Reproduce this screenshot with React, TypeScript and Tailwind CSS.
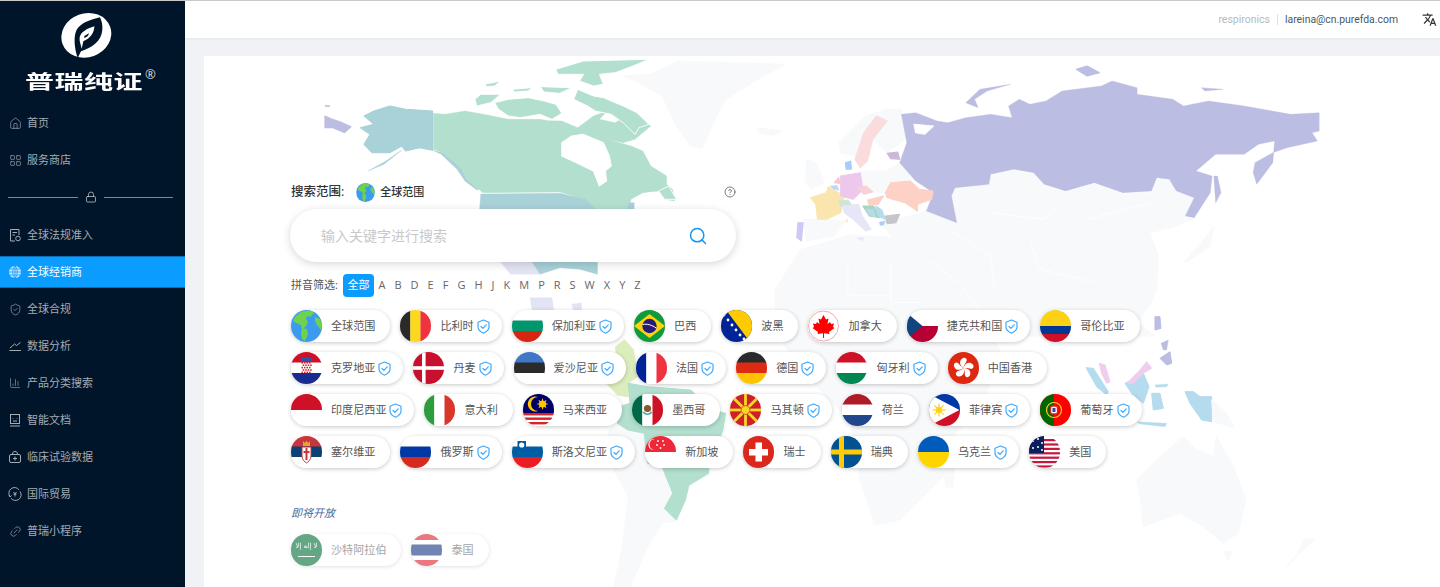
import React from "react";
import { Home, LayoutGrid, Lock, ShieldCheck, ChartColumn, Search, CircleHelp, Link2 } from "lucide-react";
import { MdTranslate } from "react-icons/md";

const FONT = "font-['Open_Sans','Noto_Sans_CJK_SC',sans-serif]";

const Shield = () => (
  <svg width="13" height="15" viewBox="0 0 13 15" fill="none" stroke="#42a9fb" strokeWidth="1.2" strokeLinejoin="round" strokeLinecap="round" className="shrink-0">
    <path d="M6.5 1 L12 3.2 V8 C12 11 9.5 12.8 6.5 14.2 C3.5 12.8 1 11 1 8 V3.2 Z" />
    <path d="M4 7.5 L5.9 9.4 L9.2 5.8" />
  </svg>
);

const Fl = ({ children, bg = "#fff", dim = false }: { children?: React.ReactNode; bg?: string; dim?: boolean }) => (
  <svg viewBox="0 0 31 32" className={`w-[31px] h-[32px] rounded-full shrink-0 ${dim ? "opacity-60" : ""}`} style={{ background: bg }}>
    {children}
  </svg>
);
const H3 = ({ a, b, c }: { a: string; b: string; c: string }) => (
  <>
    <rect width="31" height="11" y="0" fill={a} />
    <rect width="31" height="11" y="10.5" fill={b} />
    <rect width="31" height="11" y="21" fill={c} />
  </>
);
const V3 = ({ a, b, c }: { a: string; b: string; c: string }) => (
  <>
    <rect width="10.5" height="32" x="0" fill={a} />
    <rect width="10.5" height="32" x="10.3" fill={b} />
    <rect width="10.5" height="32" x="20.5" fill={c} />
  </>
);

const Globe = () => (
  <>
    <rect width="31" height="32" fill="#3c9bee" />
    <path d="M4 7 L10 2 L19 0 L23 3 L19 7 L16 6 L15 9 L17 12 L15 16 L11 20 L10 15 L5 13 L2 11 Z" fill="#6fd24c" />
    <path d="M11 18 L16 19 L17 24 L14 31 L11 29 L10 23 Z" fill="#6fd24c" />
    <path d="M24 7 L29 9 L31 14 L30 20 L26 15 L24 11 Z" fill="#6fd24c" />
  </>
);

const flags: Record<string, React.ReactNode> = {
  全球范围: <Fl><Globe /></Fl>,
  比利时: <Fl><V3 a="#2a2a2a" b="#fcd91f" c="#ef3340" /></Fl>,
  保加利亚: <Fl><H3 a="#fff" b="#00966e" c="#d62612" /></Fl>,
  巴西: (
    <Fl bg="#0f9b3b">
      <path d="M15.5 4 L31 16 L15.5 28 L0 16 Z" fill="#fdd20a" />
      <circle cx="15.5" cy="16" r="7.2" fill="#2a1a78" />
      <path d="M8.6 14.5 C13 13.5 18 15 22.4 18.2" stroke="#fff" strokeWidth="1" fill="none" />
    </Fl>
  ),
  波黑: (
    <Fl bg="#002395">
      <path d="M5 0 H31 V32 H29 Z" fill="#fecb00" />
      {[[3,5],[7,10],[11,15],[15,20],[19,25],[23,29]].map(([x, y], i) => (
        <circle key={i} cx={x} cy={y} r="1.4" fill="#fff" />
      ))}
    </Fl>
  ),
  加拿大: (
    <Fl>
      <circle cx="15.5" cy="16" r="15" fill="none" stroke="#f9a7a7" strokeWidth="1" />
      <path d="M15.5 5 L18 9.5 L20.5 8.5 L19.5 14 L22 12 L23 14 L26 13.5 L25 17 L26.5 18 L21 22 L21.5 24 L16 23.3 V28 H15 V23.3 L9.5 24 L10 22 L4.5 18 L6 17 L5 13.5 L8 14 L9 12 L11.5 14 L10.5 8.5 L13 9.5 Z" fill="#ff0000" />
    </Fl>
  ),
  捷克共和国: (
    <Fl>
      <rect y="16" width="31" height="16" fill="#b80035" />
      <path d="M0 3 L15.5 16 L0 29 Z" fill="#11457e" />
    </Fl>
  ),
  哥伦比亚: <Fl><rect width="31" height="16" fill="#fcd116" /><rect y="16" width="31" height="8" fill="#003893" /><rect y="24" width="31" height="8" fill="#ce1126" /></Fl>,
  克罗地亚: (
    <Fl>
      <H3 a="#ce1126" b="#fff" c="#1a2b8f" />
      <rect x="10" y="5.5" width="11" height="4" fill="#2b55a8" />
      {[0,1,2,3,4].map((r) => [0,1,2,3].map((c) => (
        <rect key={`${r}${c}`} x={10.5 + c * 2.5 + (r % 2) * 1.2} y={10 + r * 2.4} width="1.5" height="1.6" fill="#d8222a" />
      )))}
    </Fl>
  ),
  丹麦: <Fl bg="#c8102e"><rect x="9" width="3.6" height="32" fill="#fff" /><rect y="14.2" width="31" height="3.6" fill="#fff" /></Fl>,
  爱沙尼亚: <Fl><H3 a="#4077c9" b="#2a2a2a" c="#fff" /></Fl>,
  法国: <Fl><V3 a="#002395" b="#fff" c="#ef3340" /></Fl>,
  德国: <Fl><H3 a="#2a2a2a" b="#dd2a12" c="#ffc400" /></Fl>,
  匈牙利: <Fl><H3 a="#ce1126" b="#fff" c="#008751" /></Fl>,
  中国香港: (
    <Fl bg="#de2910">
      {[0, 72, 144, 216, 288].map((r) => (
        <path key={r} d="M15.5 16 C11 13 11 8 15 6 C18.5 5 20 8.5 17.5 11 C16.5 12.5 16 14 15.5 16 Z" fill="#fff" transform={`rotate(${r} 15.5 16)`} />
      ))}
    </Fl>
  ),
  印度尼西亚: <Fl><rect width="31" height="16" fill="#ce1126" /></Fl>,
  意大利: <Fl><V3 a="#2e9b3f" b="#fff" c="#d8372b" /></Fl>,
  马来西亚: (
    <Fl>
      <rect width="31" height="19" fill="#010066" />
      <rect y="19" width="31" height="2.4" fill="#d8222a" />
      <rect y="23.5" width="31" height="2.4" fill="#d8222a" />
      <rect y="28" width="31" height="2.4" fill="#d8222a" />
      <path d="M15 3 A7.5 7.5 0 1 0 15 17 A6 6 0 1 1 15 3 Z" fill="#fbc800" />
      <circle cx="19.5" cy="10" r="3.6" fill="#fbc800" />
      {[0,45,90,135].map((r) => <rect key={r} x="14.3" y="9.5" width="10.4" height="1" fill="#fbc800" transform={`rotate(${r} 19.5 10)`} />)}
    </Fl>
  ),
  墨西哥: (
    <Fl>
      <V3 a="#006847" b="#fff" c="#ce1126" />
      <circle cx="15.5" cy="14.5" r="3.6" fill="#8a5a2b" />
      <path d="M10.5 18 C12 22 19 22 20.5 18 L19 17.5 C17 20 14 20 12 17.5 Z" fill="#5fa3a0" />
    </Fl>
  ),
  马其顿: (
    <Fl bg="#ce2028">
      {[0,45,90,135].map((r) => <rect key={r} x="-6" y="14.6" width="43" height="2.8" fill="#f8d826" transform={`rotate(${r} 15.5 16)`} />)}
      <circle cx="15.5" cy="16" r="4.4" fill="#f8d826" stroke="#ce2028" strokeWidth="0.7" />
    </Fl>
  ),
  荷兰: <Fl><H3 a="#ae1c28" b="#fff" c="#21468b" /></Fl>,
  菲律宾: (
    <Fl>
      <rect width="31" height="16" fill="#0038a8" />
      <rect y="16" width="31" height="16" fill="#ce1126" />
      <path d="M0 0 L31 16 L0 32 Z" fill="#fff" transform="scale(0.98 1)" />
      <circle cx="10" cy="16" r="3" fill="#fcd116" />
      {[0,45,90,135].map((r) => <rect key={r} x="3.5" y="15.4" width="13" height="1.2" fill="#fcd116" transform={`rotate(${r} 10 16)`} />)}
    </Fl>
  ),
  葡萄牙: (
    <Fl bg="#ff0000">
      <rect width="14" height="32" fill="#006600" />
      <circle cx="14" cy="16" r="7.5" fill="none" stroke="#f3d21a" strokeWidth="1.2" />
      <rect x="10.5" y="12" width="7" height="8" rx="2" fill="#fff" stroke="#d22" strokeWidth="1.3" />
      <rect x="12.5" y="14" width="3" height="4" fill="#2a4ba0" />
    </Fl>
  ),
  塞尔维亚: (
    <Fl>
      <H3 a="#c6363c" b="#0c4076" c="#fff" />
      <path d="M11 11 H20 V20 C20 24 17 26 15.5 27 C14 26 11 24 11 20 Z" fill="#fff" stroke="#c6363c" strokeWidth="1" />
      <path d="M12 5 L14 7 L15.5 4.5 L17 7 L19 5 V10 H12 Z" fill="#e0a92e" />
      <path d="M15.5 12 V24 M12.5 16 H18.5" stroke="#c6363c" strokeWidth="2" />
    </Fl>
  ),
  俄罗斯: <Fl><H3 a="#fff" b="#0039a6" c="#d52b1e" /></Fl>,
  斯洛文尼亚: (
    <Fl>
      <H3 a="#fff" b="#005da4" c="#ed1c24" />
      <path d="M5.5 5 H14 V11 C14 13 11 14.5 9.7 15 C8.5 14.5 5.5 13 5.5 11 Z" fill="#005da4" />
      <circle cx="9.7" cy="9" r="2.6" fill="#fff" />
    </Fl>
  ),
  新加坡: (
    <Fl>
      <rect width="31" height="16" fill="#ed2939" />
      <path d="M10 3 A5.6 5.6 0 1 0 10 14 A4.6 4.6 0 1 1 10 3 Z" fill="#fff" />
      {[[13,5],[18,5],[12,9],[19,9],[15.5,12]].map(([x, y], i) => <circle key={i} cx={x} cy={y} r="0.9" fill="#fff" />)}
    </Fl>
  ),
  瑞士: <Fl bg="#da291c"><rect x="12.5" y="6.5" width="6.5" height="19" fill="#fff" /><rect x="6" y="13" width="19" height="6.5" fill="#fff" /></Fl>,
  瑞典: <Fl bg="#005293"><rect x="8" width="5" height="32" fill="#fecc00" /><rect y="13.5" width="31" height="5" fill="#fecc00" /></Fl>,
  乌克兰: <Fl><rect width="31" height="16" fill="#005bbb" /><rect y="16" width="31" height="16" fill="#ffd500" /></Fl>,
  美国: (
    <Fl>
      {[0,1,2,3,4,5,6].map((i) => <rect key={i} y={3 + i * 4.4} width="31" height="2.2" fill="#c8163c" />)}
      <rect width="15" height="17" fill="#0a1f5c" />
      {[[4,5],[9,3],[13,7],[4,12],[9,11],[13,14]].map(([x, y], i) => <circle key={i} cx={x} cy={y} r="1" fill="#fff" />)}
    </Fl>
  ),
  沙特阿拉伯: (
    <Fl bg="#006c35" dim>
      <text x="15.5" y="14" textAnchor="middle" fontSize="7" fill="#fff" fontFamily="DejaVu Sans">لا إله إلا</text>
      <rect x="7" y="22" width="17" height="1" fill="#fff" />
    </Fl>
  ),
  泰国: (
    <Fl dim>
      <rect y="0" width="31" height="6" fill="#dd1f2d" />
      <rect y="10.5" width="31" height="11" fill="#14317f" />
      <rect y="26" width="31" height="6" fill="#dd1f2d" />
    </Fl>
  ),
};

const rows: [string, boolean][] = [
  ["全球范围", false], ["比利时", true], ["保加利亚", true], ["巴西", false], ["波黑", false], ["加拿大", false], ["捷克共和国", true], ["哥伦比亚", false],
  ["克罗地亚", true], ["丹麦", true], ["爱沙尼亚", true], ["法国", true], ["德国", true], ["匈牙利", true], ["中国香港", false],
  ["印度尼西亚", true], ["意大利", false], ["马来西亚", false], ["墨西哥", false], ["马其顿", true], ["荷兰", false], ["菲律宾", true], ["葡萄牙", true],
  ["塞尔维亚", false], ["俄罗斯", true], ["斯洛文尼亚", true], ["新加坡", false], ["瑞士", false], ["瑞典", false], ["乌克兰", true], ["美国", false],
];

const Pill = ({ name, verified, dim }: { name: string; verified?: boolean; dim?: boolean }) => (
  <div className={`flex items-center h-[32px] bg-white rounded-full ${verified ? "pr-[12px]" : "pr-[15px]"} ${dim ? "shadow-[0_1px_4px_rgba(0,0,0,0.12)]" : "shadow-[0_1px_4px_rgba(0,0,0,0.22)]"}`}>
    {flags[name]}
    <span className={`ml-[9px] text-[11.1px] leading-none whitespace-nowrap ${dim ? "text-[#a5a5a5]" : "text-[#555]"}`}>{name}</span>
    {verified && <span className="ml-[3px] flex"><Shield /></span>}
  </div>
);

const IconDoc = () => (
  <svg width="14" height="14" viewBox="0 0 14 14" fill="none" stroke="currentColor" strokeWidth="1">
    <path d="M7 13 H2.5 V1.5 H11 V7" /><path d="M4.5 4.5 H9 M4.5 7 H7" /><circle cx="10" cy="10.5" r="2.3" />
  </svg>
);
const IconGlobe = () => (
  <svg width="14" height="14" viewBox="0 0 14 14" fill="none">
    <circle cx="7" cy="7" r="6" fill="#cfeaff" />
    <path d="M1 7 H13 M2 4 H12 M2 10 H12 M7 1 V13 M7 1 C4 3 4 11 7 13 M7 1 C10 3 10 11 7 13" stroke="#0a9cff" strokeWidth="0.8" />
  </svg>
);
const IconLine = () => (
  <svg width="14" height="14" viewBox="0 0 14 14" fill="none" stroke="currentColor" strokeWidth="1">
    <path d="M1.5 11.5 H13" /><path d="M2 9 L6.5 5 L8.5 6.5 L12.5 3.5" />
  </svg>
);
const IconFace = () => (
  <svg width="14" height="14" viewBox="0 0 14 14" fill="none" stroke="currentColor" strokeWidth="1">
    <rect x="2.5" y="1.5" width="9" height="9" /><path d="M5 5 V5.6 M9 5 V5.6 M5 8 H9" /><path d="M2 13 H12" />
  </svg>
);
const IconKit = () => (
  <svg width="14" height="14" viewBox="0 0 14 14" fill="none" stroke="currentColor" strokeWidth="1">
    <rect x="1.5" y="4.5" width="11" height="8" rx="1.5" /><path d="M4.5 4.5 C4.5 2 5.5 1.5 7 1.5 C8.5 1.5 9.5 2 9.5 4.5" /><path d="M7 6.5 V10.5 M5 8.5 H9" />
  </svg>
);
const IconTrade = () => (
  <svg width="14" height="14" viewBox="0 0 14 14" fill="none" stroke="currentColor" strokeWidth="1">
    <path d="M2 9.5 A5.5 5.5 0 0 1 11 2.8" /><path d="M12 4.5 A5.5 5.5 0 0 1 3 11.2" /><path d="M1 8 L2 10 L3.5 8.5" /><path d="M5.5 5 L7 7 L8.5 5 M5.5 7.2 H8.5 M7 7 V9.5" />
  </svg>
);

const Item = ({ icon, label, active }: { icon: React.ReactNode; label: string; active?: boolean }) => (
  <div className={`h-[32px] flex items-center pl-[8px] text-[11px] ${active ? "bg-[#0a9cff] text-white border-y border-[#0b6fb8]" : "text-[#a4acb4]"}`}>
    <span className="w-[14px] flex justify-center shrink-0">{icon}</span>
    <span className="ml-[5px] whitespace-nowrap">{label}</span>
  </div>
);

const Logo = () => (
  <div className="h-[106px] relative">
    <div className="pt-[7px] pl-[55px]">
      <svg width="65" height="56" viewBox="0 0 195 168">
        <ellipse cx="94" cy="82" rx="76" ry="66" fill="#fff" transform="rotate(-20 94 82)" />
        <path d="M135 28 C105 35 78 45 65 65 C55 85 58 120 68 150 L78 130 C110 118 140 100 142 65 C143 50 140 38 135 28Z" fill="#00152a" />
        <path d="M74 88 C78 72 95 62 118 55 C118 75 105 92 85 100 L80 122 C78 110 72 100 74 88Z" fill="#fff" />
        <path d="M88 84 L102 76 C100 84 96 88 88 90Z" fill="#00152a" />
      </svg>
    </div>
    <div className="absolute left-[24px] top-[66px] w-[120px] text-center text-[29px] leading-[26px] font-bold text-white tracking-[0.5px] scale-y-[0.68] font-['Noto_Sans_CJK_SC',sans-serif] whitespace-nowrap">普瑞纯证</div>
    <div className="absolute left-[145px] top-[67px] text-[13px] leading-none text-[#d8dce0]">®</div>
  </div>
);

const Sidebar = () => (
  <aside className="w-[185px] shrink-0 bg-[#00152a] flex flex-col">
    <Logo />
    <div className="flex flex-col gap-[5px]">
      <Item icon={<Home size={13} strokeWidth={1.2} />} label="首页" />
      <Item icon={<LayoutGrid size={13} strokeWidth={1.2} />} label="服务商店" />
    </div>
    <div className="h-[43px] flex items-center pl-[8px] pr-[12px] pb-[1px]">
      <div className="w-[70px] h-px bg-[#7e8894]" />
      <div className="flex-1 flex justify-center text-[#c4c9ce]"><Lock size={12} strokeWidth={1.5} /></div>
      <div className="w-[69px] h-px bg-[#7e8894]" />
    </div>
    <div className="flex flex-col gap-[5px]">
      <Item icon={<IconDoc />} label="全球法规准入" />
      <Item icon={<IconGlobe />} label="全球经销商" active />
      <Item icon={<ShieldCheck size={13} strokeWidth={1.2} />} label="全球合规" />
      <Item icon={<IconLine />} label="数据分析" />
      <Item icon={<ChartColumn size={12} strokeWidth={1.2} />} label="产品分类搜索" />
      <Item icon={<IconFace />} label="智能文档" />
      <Item icon={<IconKit />} label="临床试验数据" />
      <Item icon={<IconTrade />} label="国际贸易" />
      <Item icon={<Link2 size={13} strokeWidth={1.2} className="-rotate-45" />} label="普瑞小程序" />
    </div>
  </aside>
);

const Header = () => (
  <header className="h-[37px] shrink-0 bg-white shadow-[0_1px_3px_rgba(0,0,0,0.05)] flex items-center justify-end pr-[3px] font-['Roboto','Noto_Sans_CJK_SC',sans-serif]">
    <span className="text-[10.5px] text-[#b3bbc2]">respironics</span>
    <span className="w-px h-[11px] bg-[#dde1e4] mx-[7px]" />
    <span className="text-[10.4px] text-[#44586a]">lareina@cn.purefda.com</span>
    <MdTranslate size={15} className="ml-[24px] text-[#333]" />
  </header>
);

const LIGHT = "#f8f9fb";
const TEAL = "#b2dfce";
const Poly = ({ p, f, s = 3 }: { p: string; f: string; s?: number }) => (
  <polygon points={p} fill={f} stroke={f} strokeWidth={s} strokeLinejoin="round" />
);
const Isle = ({ p }: { p: string }) => (
  <polygon points={p} fill={TEAL} stroke="#fff" strokeWidth={2.5} strokeLinejoin="round" />
);

const WorldMap = () => (
  <svg viewBox="204 56 1236 531" className="absolute left-0 top-0 w-[1236px] h-[531px] blur-[0.4px]" preserveAspectRatio="none">
    <Poly f={LIGHT} p="800,250 850,235 940,240 960,290 1000,350 985,400 950,440 950,470 900,520 875,525 860,480 850,420 800,370 775,330 775,290" s={1} />
    <Poly f={LIGHT} p="944,470 955,463 953,487 946,487" s={1} />

    <g transform="translate(204 56) scale(0.3954 0.3333)">
      <Poly f={LIGHT} p="1060,60 1130,55 1200,15 1470,25 1400,70 1320,130 1300,170 1260,275 1230,270 1190,200 1160,120 1100,80" />
      <Poly f={LIGHT} p="1400,215 1460,225 1440,238 1405,232" />
      <Poly f="#bcbde2" p="306,180 325,190 345,198 372,212 355,230 325,215 306,215" />
      <Poly f="#bcbde2" p="306,148 318,148 318,152 306,152" s={1} />
      <Poly f="#a8d1d8" p="578,165 510,160 470,150 430,165 405,180 430,205 395,215 420,235 405,265 425,290 470,290 500,270 510,285 545,275 578,283" />
      <Poly f="#a8d1d8" p="500,283 455,325 415,345 460,315 490,290" s={1} />
      <Poly f="#a8d1d8" p="578,283 605,290 650,335 665,370 695,400 690,402 660,375 640,340 600,295" s={1} />
      <Poly f={TEAL} p="580,172 610,175 660,165 720,178 770,190 850,190 870,194 905,195 945,215 985,180 1020,165 1000,190 1040,200 1060,185 1090,180 1130,210 1090,250 1060,260 1020,250 1080,270 1110,285 1130,330 1170,360 1170,385 1185,400 1190,435 1165,430 1150,405 1110,410 1080,430 1075,460 985,460 960,430 900,408 705,410 695,400 665,370 650,335 605,290 580,280" s={1} />
      <Poly f="#fff" p="905,260 930,240 960,235 1010,260 1025,300 1030,330 1015,345 1018,375 1000,390 985,345 950,325 905,300" />
      <Poly f="#fff" p="1100,430 1125,410 1150,425 1130,450 1105,450" />
      <Isle p="890,40 960,15 1125,10 1085,30 1040,50 1000,55 1010,85 985,90 950,75 960,55 895,55" />
      <Isle p="685,130 700,115 750,115 725,140 690,150" />
      <Isle p="745,160 735,140 770,130 820,125 860,135 890,145 905,172 880,190 850,175 800,185 770,180" />
      <Isle p="935,130 945,100 985,120 1010,125 1060,150 1095,170 1125,205 1100,215 1090,235 1060,200 1030,175 990,165 970,150" />
      <Isle p="780,100 830,95 820,105 785,108" />
      <Isle p="710,85 750,75 735,90 715,92" />
      <Isle p="850,92 930,95 900,112 860,108" />
      <Isle p="1150,405 1175,390 1195,430 1165,430" />
      <Poly f="#a8d1d8" p="700,414 900,412 965,430 990,460 697,460" s={1} />
      <Poly f="#a8d1d8" p="1075,440 1088,440 1088,460 1070,460" s={1} />
      <Poly f="#e3e4f3" p="750,618 835,618 850,655 775,655" s={1} />
      <Poly f="#a8d1d8" p="830,618 995,618 995,655 950,640 900,635 850,655" s={1} />
      <Poly f="#e3e4f3" p="825,725 880,725 885,765 830,765" s={1} />
      <Poly f="#e3e4f3" p="930,745 955,740 955,765 935,765" s={1} />
    </g>

    <g transform="translate(780 56) scale(0.3571 0.3333)">
      <Poly f={LIGHT} p="165,260 240,180 300,160 340,160 350,250 300,290 260,250 210,300 170,290" />
      <Poly f={LIGHT} p="230,345 300,345 335,320 375,370 310,385 295,410 232,405" />
      <Poly f={LIGHT} p="75,310 100,320 125,380 90,400 70,380" />
      <Poly f={LIGHT} p="65,490 120,490 185,495 150,540 75,555" />
      <Poly f={LIGHT} p="490,395 590,360 655,345 710,355 745,390 800,410 880,385 960,415 1040,410 1060,370 1090,375 1110,410 1160,425 1135,485 1160,490 1110,510 1035,530 1060,600 1055,700 1040,740 1000,800 1050,840 300,840 280,760 230,650 330,560 280,500 400,470" />
      <Poly f={LIGHT} p="60,590 200,560 300,600 300,840 0,840 0,720" />
      <path d="M190 610 V720 H310 M310 620 V740 H400 M470 520 L590 600 L600 700 M590 470 L740 490 L800 420 L860 490 L1040 440 M700 560 L730 640 L880 680 M400 600 L500 680 L560 760" fill="none" stroke="#fff" strokeWidth="2.5" />
      <Poly f="#fff" p="1060,540 1120,510 1140,495 1100,560 1130,620 1160,700 1240,800 1300,840 1070,840 1065,700 1070,600" />
      <Poly f={LIGHT} p="1130,620 1180,560 1215,510 1205,570 1150,610" />
      <Poly f="#bcbde2" p="340,175 380,170 440,195 470,200 520,185 590,175 650,185 640,150 670,130 700,145 745,135 790,105 900,90 930,75 1000,95 1000,115 1100,130 1130,150 1200,135 1300,150 1430,175 1510,170 1510,225 1490,230 1505,255 1420,275 1380,290 1330,320 1325,350 1335,385 1380,320 1385,255 1340,265 1300,295 1220,295 1165,345 1210,360 1205,410 1160,485 1135,480 1160,425 1110,405 1090,370 1055,365 1040,405 960,410 880,380 800,405 740,385 710,350 655,340 590,355 585,385 490,395 480,420 495,500 410,465 430,410 380,375 335,320 355,260" s={1} />
      <Poly f="#fff" p="375,205 430,210 405,235 380,230" />
      <Poly f="#bcbde2" p="520,140 560,100 645,85 580,105 545,130 555,155" s={1} />
      <Poly f="#bcbde2" p="830,40 860,30 895,50 860,60" />
      <Poly f="#bcbde2" p="1180,95 1240,100 1190,105" s={1} />
      <Poly f="#bcbde2" p="1215,360 1225,360 1235,410 1220,440" s={1} />
      <Poly f="#cbb8d8" p="300,292 330,288 335,310 310,308" />
      <Poly f="#fbdcde" p="210,310 235,230 270,180 300,195 260,250 245,315 225,335" />
      <Poly f="#a8cdfb" p="183,320 198,315 200,340 185,340" />
      <Poly f="#fbe5ae" p="85,425 130,410 135,392 180,420 170,470 130,490 105,490 100,445" />
      <Poly f="#ecc8ec" p="170,360 225,350 232,400 205,430 170,420" />
      <Poly f="#f9c6d0" p="150,380 165,362 170,385" s={1} />
      <Poly f="#b8d8f8" p="140,390 160,388 165,403 150,400" s={1} />
      <Poly f="#f8d0d8" p="215,395 240,390 260,408 235,415" />
      <Poly f="#cfe4d8" p="165,435 190,432 200,445 170,450" />
      <Poly f="#e5e6f6" p="175,450 220,445 230,480 255,520 240,525 205,490 180,470" />
      <Poly f="#fdd1c6" p="295,410 310,380 365,375 390,400 428,405 425,430 385,445 385,465 350,440 300,425" />
      <Poly f="#fdd1c6" p="245,432 290,420 275,445 250,448" />
      <Poly f="#a9d4c0" p="232,450 262,450 280,485 250,480" />
      <Poly f="#b4dbee" p="240,458 262,460 268,482 250,478" s={1} />
      <Poly f="#b4dbee" p="268,450 285,462 295,490 275,480" />
      <Poly f="#c5c6cc" p="295,480 335,475 325,500 300,503" />
      <Poly f="#a8cdfb" p="278,498 295,495 290,508 280,508" s={1} />
      <Poly f="#cfc8f5" p="50,500 65,500 60,555 47,545" />
      <Poly f="#fbe5ae" p="186,490 189,490 189,498 186,498" s={1} />
      <Poly f="#e5e6f6" p="215,545 235,545 230,555" s={1} />
    </g>

    <g transform="translate(480 330) scale(0.3571 0.3333)">
      <Poly f={LIGHT} p="400,280 670,270 690,290 650,410 640,430 585,470 575,510 545,575 510,580 470,650 420,771 375,771 400,640 415,500 370,410 360,300" />
      <Poly f="#dcedbc" p="405,30 380,50 385,120 355,160 385,195 415,200 415,160 440,140 430,60" />
      <Poly f={TEAL} p="415,160 470,170 590,180 650,240 688,250 680,300 640,410 640,430 585,465 575,510 550,570 517,535 540,490 510,410 470,400 460,310 415,300 385,280 390,230 420,220" />
      <Poly f={LIGHT} p="1300,420 1330,400 1325,470 1305,470" />
    </g>

    <g transform="translate(1000 280) scale(0.3333)">
      <Poly f={LIGHT} p="410,600 480,530 550,470 590,510 640,530 650,470 700,560 738,660 715,760 670,790 610,740 540,700 430,740 420,650" />
      <Poly f={LIGHT} p="670,815 695,815 685,842" />
      <Poly f={LIGHT} p="850,870 910,810 945,780 915,775 890,825" />
      <Poly f="#b4dbee" p="258,263 280,265 325,335 320,345 290,320" />
      <Poly f="#b4dbee" p="375,310 430,280 447,320 430,370 395,340" />
      <Poly f="#b4dbee" p="455,340 480,340 490,385 460,390" />
      <Poly f="#b4dbee" p="555,335 580,335 600,350 635,350 635,425 605,420 570,370" />
      <Poly f="#b4dbee" p="465,315 505,312 500,320 468,322" s={1} />
      <Poly f="#b4dbee" p="410,425 500,430 495,440 420,432" s={1} />
      <Poly f="#efcdee" p="298,250 315,255 330,305 320,310 305,280" />
      <Poly f="#efcdee" p="380,310 420,270 440,245 455,265 430,280 400,310" />
      <Poly f="#bcbde2" p="465,110 480,110 483,145 465,150" />
      <Poly f="#bcbde2" p="480,235 510,215 515,250 500,255" />
      <Poly f="#bcbde2" p="483,190 505,180 500,210 490,210" s={1} />
      <Poly f={LIGHT} p="635,360 680,400 705,445 640,425" />
    </g>
  </svg>
);

const letters = "A B D E F G H J K M P R S W X Y Z".split(" ");

export default function App() {
  return (
    <div className={`h-screen w-full overflow-hidden flex border-t border-[#c9c9c9] bg-[#f0f2f5] ${FONT}`}>
      <Sidebar />
      <div className="flex-1 min-w-0 flex flex-col">
        <Header />
        <main className="flex-1 min-h-0 pl-[19px] pt-[18px]">
          <div className="relative h-full bg-white overflow-hidden pl-[87px] pt-[126px]">
            <WorldMap />
            <div className="relative">
              <div className="w-[445px] h-[20px] flex items-center">
                <span className="text-[12.5px] font-medium text-[#333]">搜索范围:</span>
                <svg viewBox="0 0 31 32" className="w-[19px] h-[19px] rounded-full ml-[12px]"><Globe /></svg>
                <span className="ml-[5px] text-[11px] font-medium text-[#333]">全球范围</span>
                <CircleHelp size={12} strokeWidth={1.4} className="ml-auto text-[#444]" />
              </div>
              <div className="mt-[7px] w-[446px] h-[53px] -ml-[1px] bg-white rounded-full shadow-[0_2px_8px_rgba(0,0,0,0.16)] flex items-center pl-[31px] pr-[28px]">
                <input placeholder="输入关键字进行搜索" className="flex-1 min-w-0 bg-transparent outline-none text-[14px] placeholder:text-[#c9c9c9]" />
                <Search size={20} strokeWidth={1.8} className="text-[#1296f5]" />
              </div>
              <div className="mt-[12px] h-[23px] flex items-center text-[11px]">
                <span className="text-[#555] w-[52px] whitespace-nowrap">拼音筛选:</span>
                <span className="w-[31px] h-[23px] rounded-[4px] bg-[#0a9cff] text-white flex items-center justify-center">全部</span>
                {letters.map((l) => (
                  <span key={l} className="px-[4.5px] text-[#666] text-[11px]">{l}</span>
                ))}
              </div>
              <div className="mt-[13px] w-[860px] flex flex-wrap gap-[10px]">
                {rows.map(([n, v]) => <Pill key={n} name={n} verified={v} />)}
              </div>
              <div className="mt-[38px] text-[11px] italic leading-[14px] text-[#3f6c9b]">即将开放</div>
              <div className="mt-[14px] flex gap-[10px]">
                <Pill name="沙特阿拉伯" dim />
                <Pill name="泰国" dim />
              </div>
            </div>
          </div>
        </main>
      </div>
    </div>
  );
}
